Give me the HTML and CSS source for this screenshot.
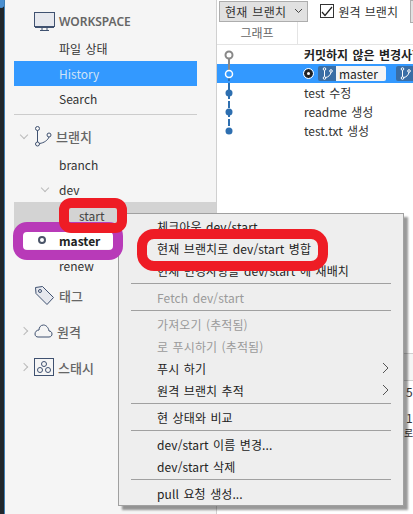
FILE: index.html
```html
<!DOCTYPE html>
<html lang="ko">
<head>
    <meta charset="UTF-8">
    <title>브랜치 메뉴</title>
    <link rel="stylesheet" href="styles.css">
</head>
<body>
<div class="app">
    <div class="edge"></div>
    <aside class="sidebar">
        <div class="group-head workspace-head">
            <svg class="icon" width="21" height="19" viewBox="0 0 21 19" fill="none" stroke="#3f5170"><rect x="0.500" y="0.500" width="20" height="14" fill="#e6e8ee"/><path d="M1 15.500h19M8 16v2M13 16v2M6 18.500h9"/></svg>
            <span>WORKSPACE</span>
        </div>
        <div class="nav-item">파일 상태</div>
        <div class="nav-item selected">History</div>
        <div class="nav-item">Search</div>
        <div class="divider"></div>
        <div class="group-head branch-head">
            <span class="caret down"></span>
            <svg class="icon" width="18" height="21" viewBox="0 0 18 21" fill="none" stroke="#3f5170"><circle cx="3.500" cy="2.500" r="2"/><circle cx="3.500" cy="18" r="2"/><circle cx="15" cy="9" r="2"/><path d="M3.500 4.500V16M5.500 17.500C10 17 14 14 15 11"/></svg>
            <span>브랜치</span>
        </div>
        <div class="nav-item">branch</div>
        <div class="nav-item dev-row"><span class="caret down"></span>dev</div>
        <div class="nav-item start-row"><span class="sub">start</span></div>
        <div class="nav-item master-row"><span class="dot"></span>master</div>
        <div class="nav-item renew-row">renew</div>
        <div class="group-head">
            <svg class="icon" width="21" height="21" viewBox="0 0 21 21" fill="none" stroke="#3f5170"><path d="M1.500 2.500L8.500 1.500L19.500 12.500L13 19.500L2 8.500Z" fill="#e6e8ee"/><circle cx="6" cy="6" r="1.500"/></svg>
            <span>태그</span>
        </div>
        <div class="group-head">
            <span class="caret right"></span>
            <svg class="icon" width="19" height="14" viewBox="0 0 19 14" fill="none" stroke="#3f5170"><path d="M4 13H15C17 13 18 11.500 18 10C18 8 16.500 7 15 7C14.500 3.500 12 1 9.500 1C6.500 1 5 3.500 5 6C2.500 6 1 8 1 10C1 12 2.500 13 4 13Z"/></svg>
            <span>원격</span>
        </div>
        <div class="group-head">
            <span class="caret right"></span>
            <svg class="icon" width="20" height="18" viewBox="0 0 20 18" fill="none" stroke="#3f5170"><rect x="0.500" y="0.500" width="19" height="17"/><circle cx="10" cy="6" r="2.500"/><circle cx="6" cy="12" r="2.500"/><circle cx="14" cy="12" r="2.500"/></svg>
            <span>스태시</span>
        </div>
    </aside>
    <main class="history">
        <div class="toolbar">
            <div class="combo">현재 브랜치<svg width="9" height="6" viewBox="0 0 9 6" fill="none" stroke="#444"><path d="M1 1l3.500 3.500L8 1"/></svg></div>
            <label class="check-label"><span class="check"><svg width="12" height="11" viewBox="0 0 12 11" fill="none" stroke="#222" stroke-width="1.200"><path d="M1 6l3 3.500L11 1"/></svg></span>원격 브랜치</label>
            <div class="cut-box"></div>
        </div>
        <div class="col-head"><div class="col-graph">그래프</div><div class="col-rest"></div></div>
        <div class="commits">
            <svg class="graph" width="20" height="96" viewBox="0 0 20 96">
                <path d="M9 10V29" stroke="#888" stroke-width="2"/>
                <path d="M9 29V86" stroke="#2e6fb0" stroke-width="2" stroke-dasharray="7 2"/>
                <circle cx="9" cy="10" r="3.500" fill="#fff" stroke="#888" stroke-width="2"/>
                <circle cx="9" cy="29" r="3.500" fill="#3399ff" stroke="#fff" stroke-width="1.500"/>
                <circle cx="9" cy="48" r="3.500" fill="#2e6fb0"/>
                <circle cx="9" cy="67" r="3.500" fill="#2e6fb0"/>
                <circle cx="9" cy="86" r="3.500" fill="#2e6fb0"/>
            </svg>
            <div class="commit strong">커밋하지 않은 변경사항</div>
            <div class="commit current">
                <span class="head-dot"></span>
                <span class="ref"><span class="ref-icon"><svg width="11" height="13" viewBox="0 0 11 13" fill="none" stroke="#fff"><circle cx="2.500" cy="2" r="1.300"/><circle cx="2.500" cy="11" r="1.300"/><circle cx="9" cy="4" r="1.300"/><path d="M2.500 3.300V9.700M3.800 10.500C6.500 10 8.500 8 9 5.300"/></svg></span><span class="ref-name">master</span></span>
                <span class="ref"><span class="ref-icon"><svg width="11" height="13" viewBox="0 0 11 13" fill="none" stroke="#fff"><circle cx="2.500" cy="2" r="1.300"/><circle cx="2.500" cy="11" r="1.300"/><circle cx="9" cy="4" r="1.300"/><path d="M2.500 3.300V9.700M3.800 10.500C6.500 10 8.500 8 9 5.300"/></svg></span></span>
            </div>
            <div class="commit">test 수정</div>
            <div class="commit">readme 생성</div>
            <div class="commit">test.txt 생성</div>
        </div>
        <div class="details">
            <div class="details-head"></div>
            <div class="details-num first">5</div>
            <div class="details-num">1</div>
            <div class="details-note">로</div>
        </div>
    </main>
</div>

<div class="mark mark-master"></div>
<div class="mark mark-start"></div>

<div class="menu">
    <div class="menu-item">체크아웃 dev/start</div>
    <div class="menu-item">현재 브랜치로 dev/start 병합</div>
    <div class="menu-item">현재 변경사항을 dev/start 에 재배치</div>
    <div class="menu-sep"></div>
    <div class="menu-item off">Fetch dev/start</div>
    <div class="menu-sep"></div>
    <div class="menu-item off">가져오기 (추적됨)</div>
    <div class="menu-item off">로 푸시하기 (추적됨)</div>
    <div class="menu-item more">푸시 하기<svg width="7" height="12" viewBox="0 0 7 12" fill="none" stroke="#555"><path d="M1 1l5 5-5 5"/></svg></div>
    <div class="menu-item more">원격 브랜치 추적<svg width="7" height="12" viewBox="0 0 7 12" fill="none" stroke="#555"><path d="M1 1l5 5-5 5"/></svg></div>
    <div class="menu-sep"></div>
    <div class="menu-item">현 상태와 비교</div>
    <div class="menu-sep"></div>
    <div class="menu-item">dev/start 이름 변경...</div>
    <div class="menu-item">dev/start 삭제</div>
    <div class="menu-sep"></div>
    <div class="menu-item">pull 요청 생성...</div>
</div>

<div class="mark mark-merge"></div>
</body>
</html>
```

FILE: styles.css
```css
html, body {
    margin: 0;
    height: 100%;
    overflow: hidden;
}
body {
    position: relative;
    font-family: "Noto Sans CJK KR", "Noto Sans", sans-serif;
    font-size: 12px;
    word-spacing: 1px;
    color: #333;
    background: #fff;
}
.app {
    display: flex;
    height: 514px;
}
.edge {
    width: 5px;
    background: #20262b;
    border-right: 1px solid #3f7fb5;
    box-sizing: border-box;
    flex: none;
    position: relative;
    overflow: hidden;
}
.edge::before {
    content: "";
    position: absolute;
    left: -3px;
    top: -3px;
    width: 8px;
    height: 11px;
    border-radius: 50%;
    background: #4a8fd0;
}
.sidebar {
    width: 212px;
    box-sizing: border-box;
    flex: none;
    background: #f5f5f5;
    border-right: 1px solid #d0d0d0;
    padding-top: 7px;
}
.group-head {
    display: flex;
    align-items: center;
    height: 36px;
    padding-left: 29px;
    font-weight: 500;
    font-size: 13px;
    color: #666;
    position: relative;
}
.group-head .icon {
    margin-right: 4px;
}
.workspace-head {
    height: 29px;
}
.workspace-head span {
    font-family: "Noto Sans", sans-serif;
    font-size: 12px;
    font-weight: 600;
}
.branch-head {
    height: 32px;
    margin-top: 5px;
}
.nav-item {
    display: flex;
    align-items: center;
    height: 25px;
    margin-left: 9px;
    margin-right: 8px;
    padding-left: 45px;
    color: #333;
    position: relative;
}
.nav-item.selected {
    background: #3399ff;
    color: #cfe3f7;
    margin-right: 19px;
}
.divider {
    border-top: 1px solid #ccc;
    margin: 3px 19px 0 9px;
}
.caret {
    position: absolute;
    width: 5px;
    height: 5px;
    border-right: 1.500px solid #bbb;
    border-bottom: 1.500px solid #bbb;
}
.group-head .caret {
    left: 16px;
}
.caret.down {
    transform: rotate(45deg);
    margin-top: -3px;
}
.caret.right {
    transform: rotate(-45deg);
}
.dev-row .caret {
    left: 28px;
}
.start-row {
    background: #d3d3d3;
    margin-right: 0;
    padding-left: 0;
    height: 29px;
}
.sub {
    margin-left: 65px;
    margin-top: -3px;
    color: #444;
}
.master-row {
    font-weight: 700;
    color: #222;
    padding-left: 45px;
    margin-right: 94px;
    background: #fff;
    height: 18px;
    z-index: 1;
}
.dot {
    position: absolute;
    left: 24px;
    width: 4px;
    height: 4px;
    border: 2.500px solid #4a5468;
    border-radius: 50%;
}
.renew-row {
    margin-top: 4px;
    height: 24px;
}
.history {
    flex: 1;
    min-width: 0;
    overflow: hidden;
}
.toolbar {
    display: flex;
    align-items: center;
    height: 22px;
}
.combo {
    display: flex;
    align-items: center;
    gap: 8px;
    height: 21px;
    box-sizing: border-box;
    margin: 0 0 0 2px;
    padding: 0 4px 0 5px;
    background: #e1e1e1;
    border: 1px solid #adadad;
    white-space: nowrap;
    letter-spacing: 0.3px;
}
.check-label {
    display: flex;
    align-items: center;
    gap: 4px;
    margin-left: 12px;
    white-space: nowrap;
}
.check {
    display: flex;
    align-items: center;
    justify-content: center;
    width: 12px;
    height: 12px;
    border: 1px solid #333;
}
.cut-box {
    width: 6px;
    height: 21px;
    margin-left: 12px;
    flex: none;
    background: #e1e1e1;
    border: 1px solid #adadad;
}
.col-head {
    display: flex;
    height: 23px;
    box-sizing: border-box;
    border-bottom: 1px solid #e4e4e4;
}
.col-graph {
    width: 80px;
    text-align: center;
    color: #666;
    border-right: 1px solid #e4e4e4;
    line-height: 22px;
}
.commits {
    position: relative;
    height: 308px;
}
.graph {
    position: absolute;
    left: 3px;
    top: 0;
    z-index: 1;
}
.commit {
    display: flex;
    align-items: center;
    height: 19px;
    padding-left: 87px;
    white-space: nowrap;
    color: #333;
}
.commit.strong {
    font-weight: 700;
    color: #222;
}
.commit.current {
    background: #3399ff;
}
.head-dot {
    flex: none;
    width: 3px;
    height: 3px;
    border: 3px solid #222;
    background: #fff;
    border-radius: 50%;
    margin-right: 5px;
    outline: 1px solid #fff;
}
.ref {
    display: flex;
    flex: none;
    height: 15px;
    margin-right: 10px;
    align-items: stretch;
    border-radius: 2px;
    overflow: hidden;
}
.ref-icon {
    display: flex;
    flex: none;
    align-items: center;
    justify-content: center;
    width: 18px;
    background: #3a6ea5;
}
.ref-name {
    flex: none;
    box-sizing: border-box;
    width: 50px;
    background: #f5f5f5;
    color: #222;
    padding-left: 3px;
    line-height: 15px;
}
.details-head {
    height: 28px;
    box-sizing: border-box;
    background: #f5f5f5;
    border-top: 1px solid #d0d0d0;
    border-bottom: 1px solid #d0d0d0;
}
.details-num {
    padding-left: 189px;
    height: 26px;
    line-height: 26px;
    color: #333;
}
.details-num.first {
    margin-top: -2px;
}
.details-note {
    padding-left: 187px;
    margin-top: -6px;
    font-size: 10px;
    color: #333;
}
.menu {
    position: absolute;
    left: 118px;
    top: 213px;
    width: 286px;
    height: 293px;
    box-sizing: border-box;
    background: #eeeeee;
    border: 1px solid #a0a0a0;
    box-shadow: 4px 4px 2px rgba(0, 0, 0, 0.4);
    padding: 1px 2px;
}
.menu-item {
    display: flex;
    align-items: center;
    justify-content: space-between;
    height: 22px;
    padding: 0 12px 0 36px;
    color: #222;
    white-space: nowrap;
    letter-spacing: 0.1px;
}
.menu-item.off {
    color: #9a9a9a;
}
.menu-sep {
    border-top: 1px solid #a0a0a0;
    margin: 2px 10px 2px 10px;
}
.mark {
    position: absolute;
    box-sizing: border-box;
    border-style: solid;
    background: transparent;
}
.mark-start {
    left: 59px;
    top: 198px;
    width: 68px;
    height: 35px;
    border-width: 10px;
    border-color: #ee1c25;
    border-radius: 12px;
    z-index: 3;
}
.mark-master {
    left: 13px;
    top: 222px;
    width: 110px;
    height: 38px;
    border-width: 10px;
    border-color: #b83ab8;
    border-radius: 14px;
    z-index: 2;
}
.mark-merge {
    left: 137px;
    top: 229px;
    width: 191px;
    height: 42px;
    border-width: 10px;
    border-color: #ee1c25;
    border-radius: 17px;
}
```
